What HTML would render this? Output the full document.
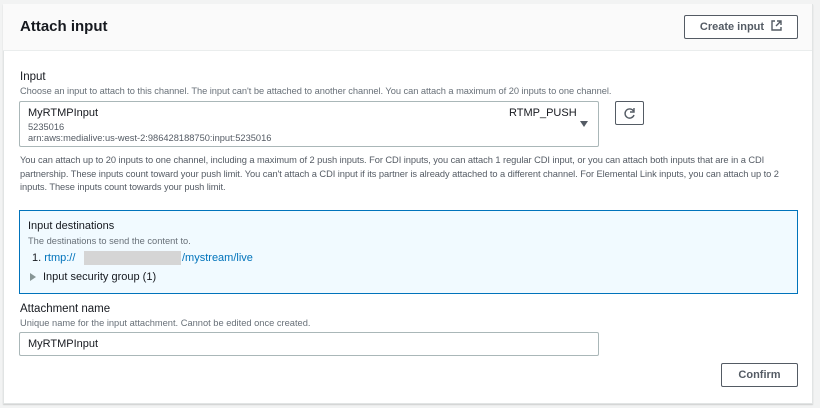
<!DOCTYPE html>
<html><head><meta charset="utf-8"><style>
body{margin:0;width:820px;height:408px;background:#f2f3f3;font-family:"Liberation Sans",sans-serif;color:#16191f;position:relative;overflow:hidden}
.a{position:absolute;white-space:nowrap}
.panel{position:absolute;left:3px;top:4px;width:808px;height:398px;background:#fff;border:1px solid #e1e4e4;box-shadow:0 1px 1px rgba(0,0,0,.15)}
.hdr{position:absolute;left:3px;top:4px;width:809px;height:46px;background:#fafafa;border-bottom:1px solid #eaeded}
.btn{position:absolute;border:1px solid #545b64;border-radius:2px;background:#fff;font-weight:bold;font-size:11px;color:#545b64;text-align:center;box-sizing:border-box}
.sm{font-size:9.3px;color:#687078}
</style></head><body>
<div class="panel"></div>
<div class="hdr"></div>
<div class="a" style="left:20px;top:18px;font-size:15px;font-weight:bold">Attach input</div>
<div class="btn" style="left:684px;top:15px;width:114px;height:24px;line-height:22px">Create input <svg width="11" height="11" viewBox="0 0 11 11" style="vertical-align:-1px;margin-left:4px"><path d="M4 1H1v9h9V7M6 1h4v4M10 1L5 6" fill="none" stroke="#545b64" stroke-width="1.4"/></svg></div>
<div class="a" style="left:20px;top:71px;font-size:11.5px">Input</div>
<div class="a sm" style="left:20px;top:86px;letter-spacing:-0.05px">Choose an input to attach to this channel. The input can't be attached to another channel. You can attach a maximum of 20 inputs to one channel.</div>
<div class="a" style="left:19px;top:101px;width:580px;height:46px;border:1px solid #aab7b8;border-radius:2px;box-sizing:border-box"></div>
<div class="a" style="left:28px;top:107px;font-size:11px">MyRTMPInput</div>
<div class="a" style="left:509px;top:107px;font-size:11px">RTMP_PUSH</div>
<div class="a" style="left:580px;top:121px;width:0;height:0;border-left:4px solid transparent;border-right:4px solid transparent;border-top:6px solid #545b64"></div>
<div class="a sm" style="left:28px;top:122px;color:#545b64">5235016</div>
<div class="a sm" style="left:28px;top:133px;color:#545b64">arn:aws:medialive:us-west-2:986428188750:input:5235016</div>
<div class="btn" style="left:615px;top:101px;width:29px;height:24px"><svg width="13" height="13" viewBox="0 0 13 13" style="margin-top:5px"><path d="M10.5 4A4.6 4.6 0 1 0 11 8" fill="none" stroke="#545b64" stroke-width="1.4"/><path d="M11 1v4H7" fill="none" stroke="#545b64" stroke-width="1.4"/></svg></div>
<div class="a sm" style="left:20px;top:154px;line-height:13.5px;white-space:normal;width:785px;letter-spacing:-0.06px;color:#545b64">You can attach up to 20 inputs to one channel, including a maximum of 2 push inputs. For CDI inputs, you can attach 1 regular CDI input, or you can attach both inputs that are in a CDI partnership. These inputs count toward your push limit. You can't attach a CDI input if its partner is already attached to a different channel. For Elemental Link inputs, you can attach up to 2 inputs. These inputs count towards your push limit.</div>
<div class="a" style="left:19px;top:210px;width:779px;height:84px;background:#f1faff;border:1px solid #0073bb;box-sizing:border-box"></div>
<div class="a" style="left:28px;top:220px;font-size:11px">Input destinations</div>
<div class="a sm" style="left:28px;top:236px">The destinations to send the content to.</div>
<div class="a" style="left:32px;top:252px;font-size:11px">1. <span style="color:#0073bb">rtmp://</span></div>
<div class="a" style="left:84px;top:251px;width:97px;height:14px;background:#d5d5d5"></div>
<div class="a" style="left:182px;top:252px;font-size:11px;color:#0073bb">/mystream/live</div>
<div class="a" style="left:30px;top:273px;width:0;height:0;border-top:4px solid transparent;border-bottom:4px solid transparent;border-left:6px solid #879596"></div>
<div class="a" style="left:43px;top:271px;font-size:11px">Input security group (1)</div>
<div class="a" style="left:20px;top:303px;font-size:11.5px">Attachment name</div>
<div class="a sm" style="left:20px;top:318px">Unique name for the input attachment. Cannot be edited once created.</div>
<div class="a" style="left:19px;top:332px;width:580px;height:24px;border:1px solid #aab7b8;border-radius:2px;box-sizing:border-box"></div>
<div class="a" style="left:28px;top:338px;font-size:11px">MyRTMPInput</div>
<div class="btn" style="left:721px;top:363px;width:77px;height:24px;line-height:22px">Confirm</div>
</body></html>
